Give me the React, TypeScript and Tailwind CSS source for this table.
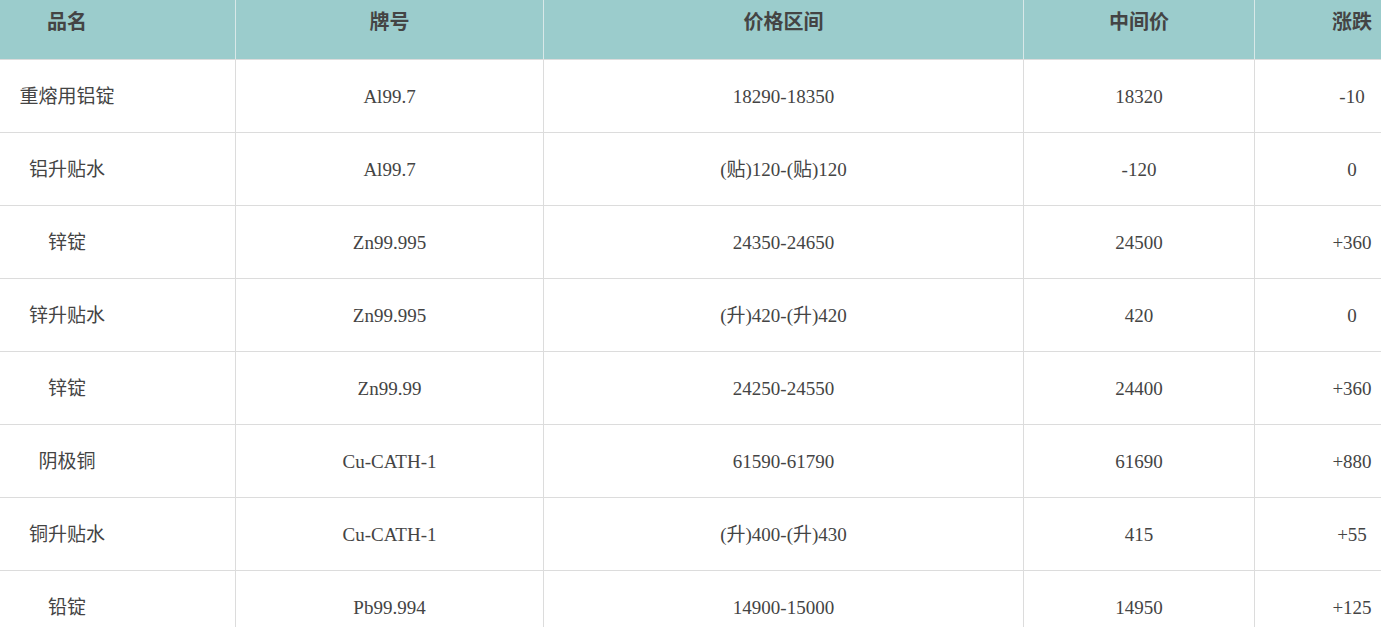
import React from "react";

const rows = [
  ["重熔用铝锭", "Al99.7", "18290-18350", "18320", "-10"],
  ["铝升贴水", "Al99.7", "(贴)120-(贴)120", "-120", "0"],
  ["锌锭", "Zn99.995", "24350-24650", "24500", "+360"],
  ["锌升贴水", "Zn99.995", "(升)420-(升)420", "420", "0"],
  ["锌锭", "Zn99.99", "24250-24550", "24400", "+360"],
  ["阴极铜", "Cu-CATH-1", "61590-61790", "61690", "+880"],
  ["铜升贴水", "Cu-CATH-1", "(升)400-(升)430", "415", "+55"],
  ["铅锭", "Pb99.994", "14900-15000", "14950", "+125"],
];

const headers = ["品名", "牌号", "价格区间", "中间价", "涨跌"];

const grid = "grid grid-cols-[337px_308px_480px_231px_194px]";

export default function App() {
  return (
    <div
      className="w-[1381px] h-[627px] overflow-hidden bg-white"
      style={{ fontFamily: '"Liberation Serif", "Noto Sans CJK SC", serif' }}
    >
      <div className="ml-[-101px] w-[1550px]">
        <div className={`${grid} h-[60px] bg-[#9bcccc] border-b border-[#dcdcdc]`}>
          {headers.map((h, i) => (
            <div
              key={i}
              className={`flex justify-center pt-[8px] text-[20px] font-bold text-[#444] leading-[28px] ${i < 4 ? "border-r border-[#d8e8e8]" : ""}`}
            >
              {h}
            </div>
          ))}
        </div>
        {rows.map((r, ri) => (
          <div key={ri} className={`${grid} h-[73px] border-b border-[#dcdcdc]`}>
            {r.map((c, ci) => (
              <div
                key={ci}
                className={`flex items-center justify-center pt-[2px] text-[19px] text-[#444] ${ci < 4 ? "border-r border-[#dcdcdc]" : ""}`}
              >
                {c}
              </div>
            ))}
          </div>
        ))}
      </div>
    </div>
  );
}
